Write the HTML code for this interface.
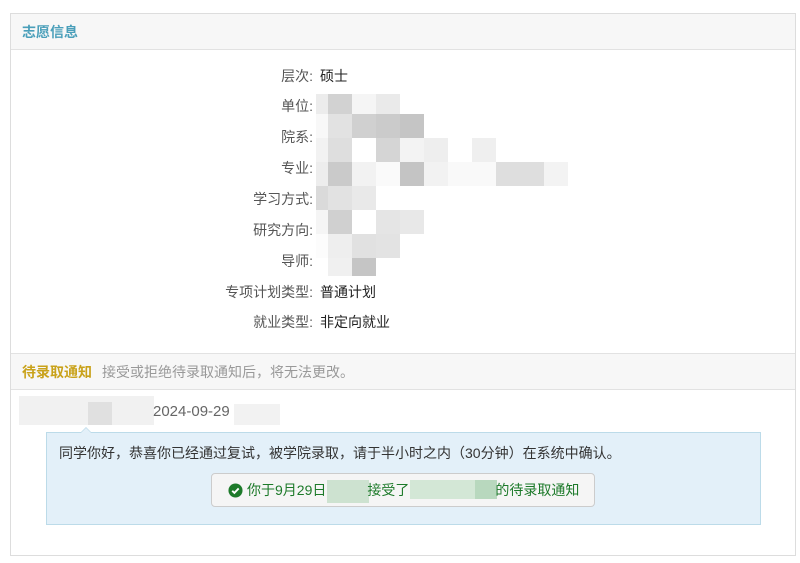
<!DOCTYPE html>
<html><head><meta charset="utf-8"><style>
*{margin:0;padding:0;box-sizing:border-box}
body{width:800px;height:563px;background:#fff;position:relative;overflow:hidden;font-family:"Liberation Sans","Noto Sans CJK SC",sans-serif;font-size:14px;color:#333}
.a{position:absolute}
.panel{left:10px;top:13px;width:786px;height:543px;border:1px solid #ddd}
.hd{left:11px;width:784px;background:#f7f7f7;border-bottom:1px solid #e2e2e2}
.lbl{position:absolute;right:487px;color:#555;white-space:nowrap;line-height:16px}
.val{position:absolute;left:320px;color:#222;line-height:16px}
.m{position:absolute}
</style></head><body>
<div class="a panel"></div>
<div class="a hd" style="top:14px;height:36px"></div>
<div class="a" style="left:22px;top:23px;color:#4a9fba;font-weight:bold;font-size:14px;line-height:18px">志愿信息</div>

<div class="lbl" style="top:68px">层次:</div><div class="val" style="top:68px">硕士</div>
<div class="lbl" style="top:98px">单位:</div>
<div class="lbl" style="top:129px">院系:</div>
<div class="lbl" style="top:160px">专业:</div>
<div class="lbl" style="top:191px">学习方式:</div>
<div class="lbl" style="top:222px">研究方向:</div>
<div class="lbl" style="top:253px">导师:</div>
<div class="lbl" style="top:284px">专项计划类型:</div><div class="val" style="top:284px">普通计划</div>
<div class="lbl" style="top:314px">就业类型:</div><div class="val" style="top:314px">非定向就业</div>

<!-- mosaic -->
<div class="m" style="left:316px;top:94px;width:12px;height:20px;background:#ececec"></div>
<div class="m" style="left:328px;top:94px;width:24px;height:20px;background:#d2d2d2"></div>
<div class="m" style="left:352px;top:94px;width:24px;height:20px;background:#f5f5f5"></div>
<div class="m" style="left:376px;top:94px;width:24px;height:20px;background:#eaeaea"></div>

<div class="m" style="left:316px;top:114px;width:12px;height:24px;background:#f8f8f8"></div>
<div class="m" style="left:328px;top:114px;width:24px;height:24px;background:#e2e2e2"></div>
<div class="m" style="left:352px;top:114px;width:24px;height:24px;background:#d0d0d0"></div>
<div class="m" style="left:376px;top:114px;width:24px;height:24px;background:#cbcbcb"></div>
<div class="m" style="left:400px;top:114px;width:24px;height:24px;background:#c5c5c5"></div>

<div class="m" style="left:316px;top:138px;width:12px;height:24px;background:#f2f2f2"></div>
<div class="m" style="left:328px;top:138px;width:24px;height:24px;background:#dedede"></div>
<div class="m" style="left:376px;top:138px;width:24px;height:24px;background:#d5d5d5"></div>
<div class="m" style="left:400px;top:138px;width:24px;height:24px;background:#f3f3f3"></div>
<div class="m" style="left:424px;top:138px;width:24px;height:24px;background:#eeeeee"></div>
<div class="m" style="left:472px;top:138px;width:24px;height:24px;background:#efefef"></div>

<div class="m" style="left:316px;top:162px;width:12px;height:24px;background:#ededed"></div>
<div class="m" style="left:328px;top:162px;width:24px;height:24px;background:#cacaca"></div>
<div class="m" style="left:352px;top:162px;width:24px;height:24px;background:#f2f2f2"></div>
<div class="m" style="left:376px;top:162px;width:24px;height:24px;background:#fafafa"></div>
<div class="m" style="left:400px;top:162px;width:24px;height:24px;background:#c4c4c4"></div>
<div class="m" style="left:424px;top:162px;width:24px;height:24px;background:#f2f2f2"></div>
<div class="m" style="left:448px;top:162px;width:48px;height:24px;background:#f9f9f9"></div>
<div class="m" style="left:496px;top:162px;width:48px;height:24px;background:#dedede"></div>
<div class="m" style="left:544px;top:162px;width:24px;height:24px;background:#f3f3f3"></div>

<div class="m" style="left:316px;top:186px;width:12px;height:24px;background:#dadada"></div>
<div class="m" style="left:328px;top:186px;width:24px;height:24px;background:#e2e2e2"></div>
<div class="m" style="left:352px;top:186px;width:24px;height:24px;background:#e9e9e9"></div>

<div class="m" style="left:316px;top:210px;width:12px;height:24px;background:#f5f5f5"></div>
<div class="m" style="left:328px;top:210px;width:24px;height:24px;background:#d0d0d0"></div>
<div class="m" style="left:376px;top:210px;width:24px;height:24px;background:#e5e5e5"></div>
<div class="m" style="left:400px;top:210px;width:24px;height:24px;background:#e8e8e8"></div>

<div class="m" style="left:316px;top:234px;width:12px;height:24px;background:#fcfcfc"></div>
<div class="m" style="left:328px;top:234px;width:24px;height:24px;background:#eeeeee"></div>
<div class="m" style="left:352px;top:234px;width:24px;height:24px;background:#e1e1e1"></div>
<div class="m" style="left:376px;top:234px;width:24px;height:24px;background:#e3e3e3"></div>

<div class="m" style="left:328px;top:258px;width:24px;height:18px;background:#f0f0f0"></div>
<div class="m" style="left:352px;top:258px;width:24px;height:18px;background:#c5c5c5"></div>

<!-- section 2 -->
<div class="a hd" style="top:353px;height:37px;border-top:1px solid #e2e2e2"></div>
<div class="a" style="left:22px;top:363px;line-height:18px;white-space:nowrap"><span style="color:#c9a21a;font-weight:bold">待录取通知</span><span style="color:#999;margin-left:10px">接受或拒绝待录取通知后，将无法更改。</span></div>

<div class="m" style="left:19px;top:396px;width:135px;height:29px;background:#f1f1f1"></div>
<div class="m" style="left:88px;top:402px;width:24px;height:23px;background:#e0e0e0"></div>
<div class="a" style="left:153px;top:403px;color:#666;font-size:15px;line-height:18px">2024-09-29</div>
<div class="m" style="left:234px;top:404px;width:46px;height:21px;background:#f2f2f2"></div>

<div class="a" style="left:46px;top:432px;width:715px;height:93px;background:#e3f0f9;border:1px solid #bcdbe9"></div>
<div class="a" style="left:80px;top:427px;width:0;height:0;border-left:6px solid transparent;border-right:6px solid transparent;border-bottom:6px solid #bcdbe9"></div>
<div class="a" style="left:81px;top:428px;width:0;height:0;border-left:5px solid transparent;border-right:5px solid transparent;border-bottom:5px solid #e3f0f9"></div>
<div class="a" style="left:59px;top:444px;color:#333;line-height:18px;white-space:nowrap">同学你好，恭喜你已经通过复试，被学院录取，请于半小时之内（30分钟）在系统中确认。</div>

<div class="a" style="left:211px;top:473px;width:384px;height:34px;background:#f5f5f5;border:1px solid #ccc;border-radius:4px"></div>
<svg class="a" style="left:228px;top:483px" width="15" height="15" viewBox="0 0 16 16"><circle cx="8" cy="8" r="7.5" fill="#1d7a2a"/><path d="M4.5 8.3l2.3 2.3 4.6-4.8" stroke="#fff" stroke-width="2" fill="none"/></svg>
<div class="m" style="left:327px;top:480px;width:42px;height:23px;background:#cde2d0"></div>
<div class="m" style="left:410px;top:480px;width:87px;height:19px;background:#d3e7d6"></div>
<div class="m" style="left:475px;top:480px;width:22px;height:19px;background:#b8d8be"></div>
<div class="a" style="left:247px;top:481px;color:#1d7a2a;line-height:18px;white-space:nowrap">你于9月29日<span style="display:inline-block;width:41px"></span>接受了<span style="display:inline-block;width:86px"></span>的待录取通知</div>
</body></html>
